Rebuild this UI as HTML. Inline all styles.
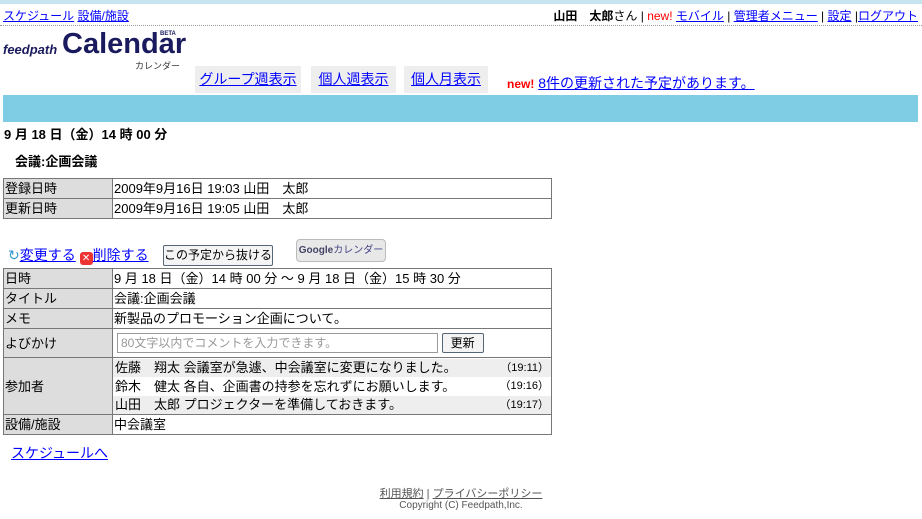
<!DOCTYPE html><html><head><meta charset="utf-8"><style>
body{margin:0;width:922px;height:519px;background:#fff;font-family:"Liberation Sans","Noto Sans CJK JP",sans-serif;font-size:13px;color:#000;position:relative;overflow:hidden}
a{color:#00f;text-decoration:underline}
.abs{position:absolute;white-space:nowrap}
table{border-collapse:collapse;position:absolute;left:3px;width:549px;font-size:13px}
td{border:1px solid #777;padding:0 1px;height:19px;line-height:19px}
td.h{background:#ddd;width:106px}
.tab{position:absolute;top:66px;height:27px;background:#eee;line-height:27px;font-size:14px;text-align:center}
</style></head><body>
<div class="abs" style="left:0;top:0;width:922px;height:4px;background:#c6e5f0"></div>
<div class="abs" style="left:3px;top:7px;font-size:12px"><a>スケジュール</a> <a>設備/施設</a></div>
<div class="abs" style="right:4px;top:7px;font-size:12px"><b>山田　太郎</b>さん | <span style="color:red">new!</span> <a>モバイル</a> | <a>管理者メニュー</a> | <a>設定</a> |<a>ログアウト</a></div>
<div class="abs" style="left:0;top:25px;width:922px;border-top:1px dotted #999"></div>
<div class="abs" style="left:3px;top:42px;color:#1a1a5e;font-style:italic;font-weight:bold;font-size:13px">feedpath</div>
<div class="abs" style="left:62px;top:28px;color:#1a1a5e;font-weight:bold;font-size:29px">Calendar</div>
<div class="abs" style="left:160px;top:31px;color:#1a1a5e;font-size:6px;font-weight:bold">BETA</div>
<div class="abs" style="left:135px;top:59px;color:#333;font-size:9px">カレンダー</div>
<div class="tab" style="left:195px;width:106px"><a>グループ週表示</a></div>
<div class="tab" style="left:311px;width:85px"><a>個人週表示</a></div>
<div class="tab" style="left:404px;width:84px"><a>個人月表示</a></div>
<div class="abs" style="left:507px;top:73px;font-size:14px"><b style="color:red;font-size:12px">new!</b> <a>8件の更新された予定があります。</a></div>
<div class="abs" style="left:3px;top:95px;width:915px;height:27px;background:#7fcde4"></div>
<div class="abs" style="left:4px;top:124px;font-weight:bold">9 月 18 日（金）14 時 00 分</div>
<div class="abs" style="left:15px;top:151px;font-weight:bold">会議:企画会議</div>
<table style="top:178px"><tr><td class="h">登録日時</td><td>2009年9月16日 19:03 山田　太郎</td></tr><tr><td class="h">更新日時</td><td>2009年9月16日 19:05 山田　太郎</td></tr></table>
<div class="abs" style="left:8px;top:245px;font-size:14px"><span style="color:#39c">↻</span><a>変更する</a> <span style="display:inline-block;width:13px;height:13px;background:#e33;border-radius:3px;color:#fff;font-size:10px;text-align:center;line-height:13px;vertical-align:-1px">✕</span><a>削除する</a></div>
<div class="abs" style="left:163px;top:245px;width:108px;height:19px;border:1px solid #567;border-radius:2px;background:#f4f4f4;font-size:12px;text-align:center;line-height:19px">この予定から抜ける</div>
<div class="abs" style="left:296px;top:239px;width:88px;height:21px;border:1px solid #bbb;border-radius:4px;background:#e8e8e8;font-size:10px;line-height:21px;text-align:center"><b style="color:#446">Google</b><span style="color:#448">カレンダー</span></div>
<table style="top:268px">
<tr><td class="h">日時</td><td colspan="2">9 月 18 日（金）14 時 00 分 ～ 9 月 18 日（金）15 時 30 分</td></tr>
<tr><td class="h">タイトル</td><td colspan="2">会議:企画会議</td></tr>
<tr><td class="h">メモ</td><td colspan="2">新製品のプロモーション企画について。</td></tr>
<tr><td class="h" style="height:28px">よびかけ</td><td colspan="2"><span style="display:inline-block;margin-left:3px;width:316px;height:18px;border:1px solid #999;color:#999;font-size:12px;line-height:18px;padding-left:3px;vertical-align:middle">80文字以内でコメントを入力できます。</span> <span style="display:inline-block;width:40px;height:18px;border:1px solid #567;border-radius:2px;background:#f4f4f4;font-size:12px;text-align:center;line-height:18px;vertical-align:middle">更新</span></td></tr>
<tr><td class="h" style="height:56px">参加者</td><td colspan="2" style="padding:0">
<div style="background:#eee;height:18px;line-height:18px;display:flex;justify-content:space-between;padding:0 2px">佐藤　翔太 会議室が急遽、中会議室に変更になりました。<span style="font-size:11px">（19:11）</span></div>
<div style="height:19px;line-height:19px;display:flex;justify-content:space-between;padding:0 2px">鈴木　健太 各自、企画書の持参を忘れずにお願いします。<span style="font-size:11px">（19:16）</span></div>
<div style="background:#eee;height:18px;line-height:18px;display:flex;justify-content:space-between;padding:0 2px">山田　太郎 プロジェクターを準備しておきます。<span style="font-size:11px">（19:17）</span></div>
</td></tr>
<tr><td class="h">設備/施設</td><td colspan="2">中会議室</td></tr>
</table>
<div class="abs" style="left:11px;top:443px;font-size:14px"><a>スケジュールへ</a></div>
<div class="abs" style="left:0;width:922px;top:485px;text-align:center;font-size:11px;color:#555"><a style="color:#555">利用規約</a> | <a style="color:#555">プライバシーポリシー</a></div>
<div class="abs" style="left:0;width:922px;top:500px;text-align:center;font-size:10px;color:#555">Copyright (C) Feedpath,Inc.</div>
</body></html>
